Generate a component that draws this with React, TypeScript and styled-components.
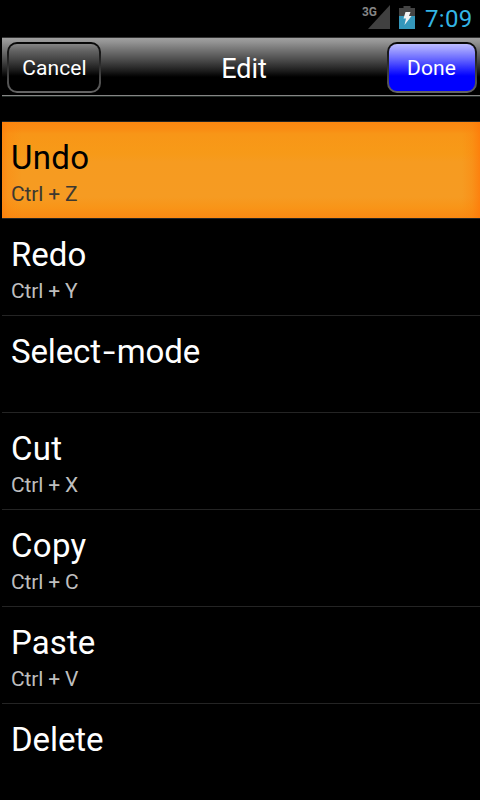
import React from 'react';
import styled, { createGlobalStyle } from 'styled-components';

const GlobalStyle = createGlobalStyle`
  * { box-sizing: border-box; }
  body { margin: 0; background: #000; overflow: hidden; font-family: Roboto, sans-serif; }
`;

const Screen = styled.div`
  width: 480px;
  height: 800px;
  overflow: hidden;
  background: #000;
  color: #fff;
`;

const StatusBar = styled.div`
  height: 37px;
  padding-right: 8px;
  display: flex;
  justify-content: flex-end;
`;

const StatusIcons = styled.svg`
  width: 58px;
  height: 37px;
  margin-right: 5px;
  flex: none;
`;

const Clock = styled.time`
  width: 47px;
  font-size: 24px;
  line-height: 38px;
  letter-spacing: 0.3px;
  color: #33b5e5;
  white-space: nowrap;
`;

const Header = styled.header`
  height: 60px;
  margin-left: 2px;
  padding: 4px 3px 2px 5px;
  display: flex;
  justify-content: space-between;
  border-top: 1px solid #333;
  border-bottom: 1px solid #222a26;
  box-shadow: inset 0 -1px #858585;
  background: linear-gradient(#a0a0a0 0, #949494 4px, #777 11px, #4b4b4b 22px, #1c1c1c 33px, #000 39px);
`;

const HeaderButton = styled.button<{ $primary?: boolean }>`
  width: ${(p) => (p.$primary ? 90 : 94)}px;
  height: 51px;
  padding: ${(p) => (p.$primary ? '1px 1px 0 0' : '1px 0 0 1px')};
  border: 2px solid transparent;
  border-radius: 10px;
  background:
    ${(p) =>
      p.$primary
        ? 'linear-gradient(#bcbcff 0, #9c9cff 6px, #6868ff 15px, #2929ff 25px, #0000ff 32px)'
        : 'linear-gradient(#858585 0, #626262 7px, #424242 16px, #1b1b1b 26px, #000 32px)'} padding-box,
    linear-gradient(#050505, #282828 40%, #666) border-box;
  color: #fff;
  font: 21px Roboto, sans-serif;
  letter-spacing: 0.1px;
`;

const Title = styled.h1`
  margin: 0;
  font-size: 27px;
  font-weight: 400;
  line-height: 54px;
`;

const List = styled.ul`
  list-style: none;
  margin: 24px 0 0 2px;
  padding: 0;
  border-top: 1px solid #222;
`;

const Row = styled.li<{ $selected?: boolean }>`
  height: 97px;
  padding: 15px 0 0 9px;
  border-bottom: 1px solid #242424;
  color: ${(p) => (p.$selected ? '#000' : '#fff')};
  background: ${(p) =>
    p.$selected
      ? `linear-gradient(to right, rgba(255,120,8,.55) 0, rgba(255,130,12,.3) 6px, rgba(250,145,22,0) 20px, transparent 460px, rgba(252,132,14,.4) 470px, rgba(255,120,8,.75) 478px),
         linear-gradient(#fa8711 0, #f98c13 7px, #f89617 12px, #f79a18 32px, #f69b20 40px, #f69b22 75px, #f89518 85px, #fa8913 96px)`
      : '#000'};
`;

const Label = styled.div<{ $spacing: number }>`
  font-size: 33px;
  line-height: 41px;
  letter-spacing: ${(p) => p.$spacing}px;
`;

const WideHyphen = styled.span`
  display: inline-block;
  width: 16px;
  text-align: center;
  transform: scaleX(1.35);
`;

const Shortcut = styled.div<{ $selected?: boolean }>`
  margin-top: 4px;
  font-size: 21px;
  line-height: 24px;
  letter-spacing: -0.15px;
  color: ${(p) => (p.$selected ? '#3c3830' : '#bebebe')};
`;

const commands = [
  { label: 'Undo', shortcut: 'Ctrl + Z', spacing: 0.3 },
  { label: 'Redo', shortcut: 'Ctrl + Y', spacing: 0 },
  { label: <>Select<WideHyphen>-</WideHyphen>mode</>, shortcut: '', spacing: -0.15 },
  { label: 'Cut', shortcut: 'Ctrl + X', spacing: 0.3 },
  { label: 'Copy', shortcut: 'Ctrl + C', spacing: 0.3 },
  { label: 'Paste', shortcut: 'Ctrl + V', spacing: 0.1 },
  { label: 'Delete', shortcut: '', spacing: -0.1 },
];

export default function App() {
  return (
    <Screen>
      <GlobalStyle />
      <StatusBar>
        <StatusIcons viewBox="362 0 58 37">
          <path d="M390 5V29H368Z" fill="#404040" />
          <text x="362" y="16" fill="#858585" fontSize="13.5" fontWeight="700" textLength="15" lengthAdjust="spacingAndGlyphs">3G</text>
          <path d="M403.500 6h7v2h4.500v8h-16V8h4.500Z" fill="#444" />
          <path d="M399 16h16v13h-16Z" fill="#3497bb" />
          <path d="M405.500 12h5l-1.500 4h2.500l-7 9 1.500-6.500H403.500Z" fill="#f2f2f2" />
        </StatusIcons>
        <Clock>7:09</Clock>
      </StatusBar>
      <Header>
        <HeaderButton>Cancel</HeaderButton>
        <Title>Edit</Title>
        <HeaderButton $primary>Done</HeaderButton>
      </Header>
      <List>
        {commands.map((c, i) => (
          <Row key={i} $selected={i === 0}>
            <Label $spacing={c.spacing}>{c.label}</Label>
            <Shortcut $selected={i === 0}>{c.shortcut}</Shortcut>
          </Row>
        ))}
      </List>
    </Screen>
  );
}
